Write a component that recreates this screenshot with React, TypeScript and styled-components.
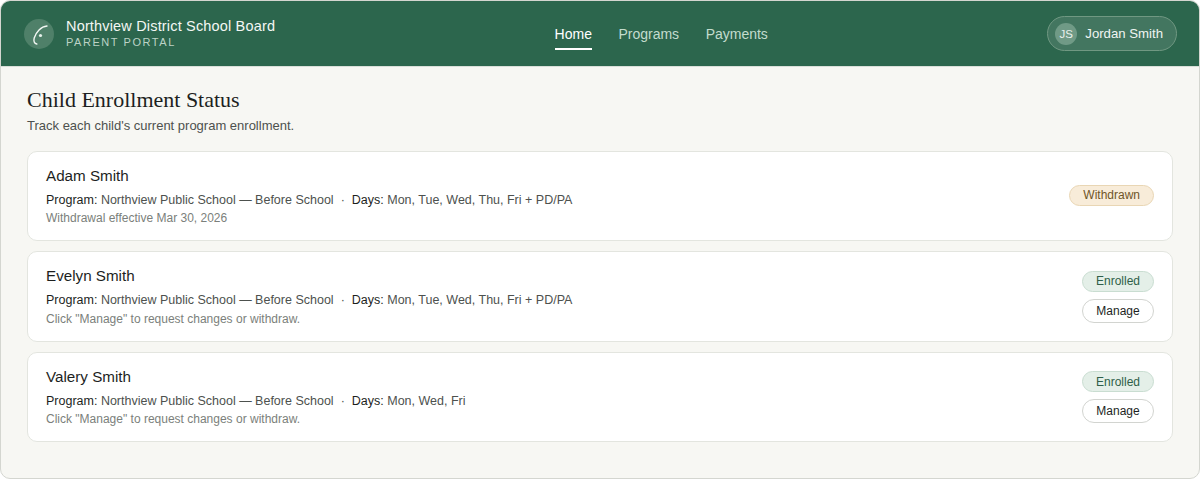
import React from "react";
import styled, { createGlobalStyle } from "styled-components";

const Global = createGlobalStyle`
  html, body { margin: 0; padding: 0; background: #ffffff; }
  body { font-family: "Liberation Sans", Arial, sans-serif; }
`;

const Frame = styled.div`
  width: 1200px;
  height: 479px;
  box-sizing: border-box;
  border: 1px solid #d4d6d0;
  border-radius: 10px;
  overflow: hidden;
  background: #f7f7f3;
`;

const Header = styled.header`
  height: 66px;
  box-sizing: border-box;
  background: #2c664d;
  border-bottom: 1px solid #d9dfd9;
  display: flex;
  justify-content: space-between;
  align-items: center;
  padding: 0 22px 0 23px;
`;

const Brand = styled.div`
  display: flex;
  align-items: center;
  gap: 12px;
`;

const BrandMark = styled.div`
  width: 30px;
  height: 30px;
  border-radius: 50%;
  background: #4f8069;
  display: flex;
  align-items: center;
  justify-content: center;
`;

const BrandText = styled.div`
  display: flex;
  flex-direction: column;
  padding-bottom: 2px;
`;

const BrandName = styled.div`
  font-size: 14.5px;
  line-height: 18px;
  letter-spacing: 0.17px;
  color: #f3f7f4;
`;

const BrandSub = styled.div`
  font-size: 11px;
  line-height: 14px;
  letter-spacing: 1.55px;
  color: #bcd3c6;
`;

const Nav = styled.nav`
  display: flex;
  gap: 26.5px;
`;

const NavLink = styled.a<{ $active?: boolean }>`
  font-size: 14px;
  line-height: 20px;
  padding: 7px 0 4px;
  color: ${(p) => (p.$active ? "#ffffff" : "#c3dccd")};
  border-bottom: 2px solid ${(p) => (p.$active ? "#ffffff" : "transparent")};
`;

const UserPill = styled.div`
  display: flex;
  align-items: center;
  gap: 8px;
  height: 35px;
  box-sizing: border-box;
  padding: 0 13px 0 7px;
  border-radius: 18px;
  background: #437660;
  border: 1px solid #709882;
`;

const Avatar = styled.div`
  width: 22px;
  height: 22px;
  border-radius: 50%;
  background: #709a86;
  color: #e8f1ec;
  font-size: 11.5px;
  display: flex;
  align-items: center;
  justify-content: center;
`;

const UserName = styled.span`
  font-size: 13.2px;
  color: #f0f5f2;
`;

const Main = styled.main`
  padding: 20px 26px 0 26px;
`;

const Title = styled.h1`
  margin: 0;
  font-family: "Liberation Serif", "Times New Roman", serif;
  font-weight: 400;
  font-size: 22px;
  line-height: 26px;
  color: #1d1f1e;
`;

const Subtitle = styled.p`
  margin: 5px 0 0;
  font-size: 13px;
  line-height: 16px;
  color: #4d514e;
`;

const CardList = styled.div`
  margin-top: 16.8px;
  display: flex;
  flex-direction: column;
  gap: 10px;
`;

const Card = styled.article`
  box-sizing: border-box;
  min-height: 90.4px;
  background: #ffffff;
  border: 1px solid #e3e5df;
  border-radius: 10px;
  padding: 14px 18px 0;
  display: flex;
  justify-content: space-between;
`;

const CardBody = styled.div`
  display: flex;
  flex-direction: column;
`;

const ChildName = styled.div`
  font-size: 15.2px;
  line-height: 20px;
  color: #1d1f1e;
`;

const Details = styled.div`
  margin-top: 5px;
  font-size: 12.5px;
  line-height: 18px;
  color: #4d514e;
`;

const Label = styled.span`
  color: #1d1f1e;
`;

const Dot = styled.span`
  margin: 0 7px;
`;

const Note = styled.div`
  margin-top: 1.6px;
  font-size: 12px;
  line-height: 16px;
  color: #7b7f7b;
`;

const Actions = styled.div<{ $single?: boolean }>`
  display: flex;
  flex-direction: column;
  align-items: stretch;
  gap: 7px;
  padding-top: ${(p) => (p.$single ? "19px" : "4.6px")};
`;

const Badge = styled.span<{ $tone: "warn" | "ok" }>`
  height: 21px;
  box-sizing: border-box;
  padding: 0 13px;
  border-radius: 11px;
  font-size: 12px;
  display: flex;
  align-items: center;
  justify-content: center;
  background: ${(p) => (p.$tone === "warn" ? "#f8ecd9" : "#e4efe8")};
  border: 1px solid ${(p) => (p.$tone === "warn" ? "#e9d6b4" : "#c9ddd1")};
  color: ${(p) => (p.$tone === "warn" ? "#6f5528" : "#2f5f49")};
`;

const ManageButton = styled.button`
  height: 24px;
  box-sizing: border-box;
  padding: 0 13px;
  border-radius: 12px;
  background: #ffffff;
  border: 1px solid #d2d4d0;
  font-family: inherit;
  font-size: 12px;
  color: #1d1f1e;
`;

const children = [
  {
    name: "Adam Smith",
    days: "Mon, Tue, Wed, Thu, Fri + PD/PA",
    note: "Withdrawal effective Mar 30, 2026",
    withdrawn: true,
  },
  {
    name: "Evelyn Smith",
    days: "Mon, Tue, Wed, Thu, Fri + PD/PA",
    note: 'Click "Manage" to request changes or withdraw.',
    withdrawn: false,
  },
  {
    name: "Valery Smith",
    days: "Mon, Wed, Fri",
    note: 'Click "Manage" to request changes or withdraw.',
    withdrawn: false,
  },
];

export default function App() {
  return (
    <>
      <Global />
      <Frame>
        <Header>
          <Brand>
            <BrandMark>
              <svg width="30" height="30" viewBox="0 0 30 30" fill="none">
                <path
                  d="M23 7C17 7.5 12 13 10.2 19C9.4 22 10.2 24.5 12.8 25"
                  stroke="#f3f7f4"
                  strokeWidth="1.4"
                  strokeLinecap="round"
                />
                <circle cx="16.5" cy="16.5" r="1.6" fill="#e6f0ea" />
              </svg>
            </BrandMark>
            <BrandText>
              <BrandName>Northview District School Board</BrandName>
              <BrandSub>PARENT PORTAL</BrandSub>
            </BrandText>
          </Brand>
          <Nav>
            <NavLink $active>Home</NavLink>
            <NavLink>Programs</NavLink>
            <NavLink>Payments</NavLink>
          </Nav>
          <UserPill>
            <Avatar>JS</Avatar>
            <UserName>Jordan Smith</UserName>
          </UserPill>
        </Header>
        <Main>
          <Title>Child Enrollment Status</Title>
          <Subtitle>Track each child's current program enrollment.</Subtitle>
          <CardList>
            {children.map((c) => (
              <Card key={c.name}>
                <CardBody>
                  <ChildName>{c.name}</ChildName>
                  <Details>
                    <Label>Program:</Label> Northview Public School — Before School
                    <Dot>·</Dot>
                    <Label>Days:</Label> {c.days}
                  </Details>
                  <Note>{c.note}</Note>
                </CardBody>
                {c.withdrawn ? (
                  <Actions $single>
                    <Badge $tone="warn">Withdrawn</Badge>
                  </Actions>
                ) : (
                  <Actions>
                    <Badge $tone="ok">Enrolled</Badge>
                    <ManageButton>Manage</ManageButton>
                  </Actions>
                )}
              </Card>
            ))}
          </CardList>
        </Main>
      </Frame>
    </>
  );
}
